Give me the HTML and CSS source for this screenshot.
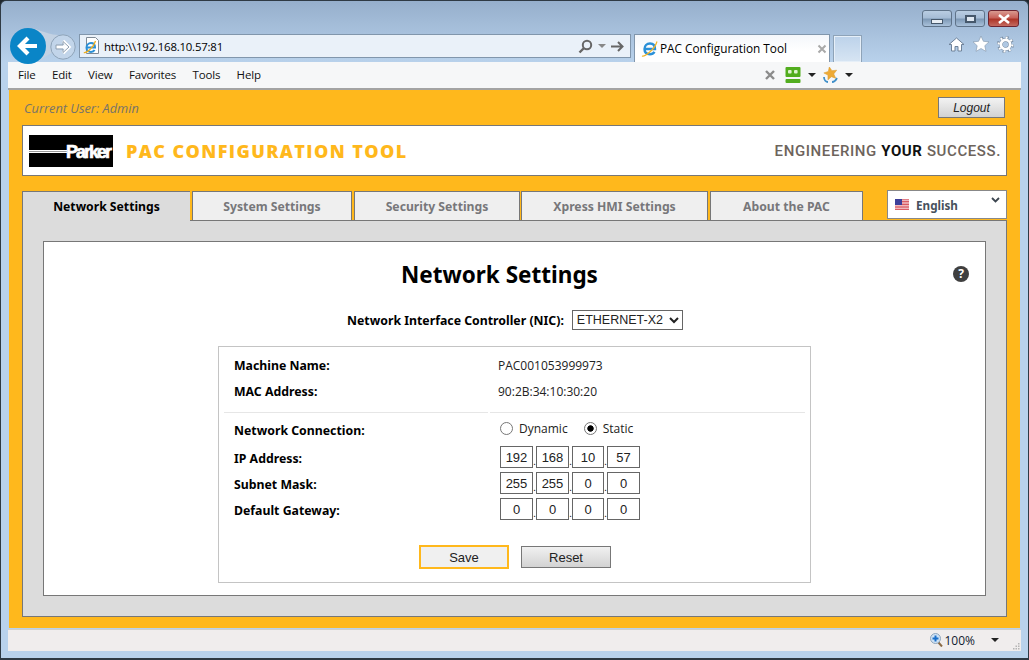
FILE: index.html
```html
<!DOCTYPE html>
<html lang="en">
<head>
    <meta charset="UTF-8">
    <title>PAC Configuration Tool</title>
    <link rel="stylesheet" href="styles.css">
</head>
<body>
    <div class="window">
        <div class="caption">
            <div class="win-btn"><span class="glyph-min"></span></div>
            <div class="win-btn"><span class="glyph-max"></span></div>
            <div class="win-btn win-close">
                <svg width="14" height="10" viewBox="0 0 14 10"><path d="M2 1l10 8M12 1L2 9" stroke="#fff" stroke-width="2.6"/></svg>
            </div>
        </div>

        <div class="nav">
            <div class="back">
                <svg class="back-icon" width="36" height="36" viewBox="0 0 36 36"><path d="M18 0c10 0 16 6 30 7v14L30 32z" fill="#c3d2e3"/><circle cx="18" cy="18" r="18" fill="#0a85c7"/><path d="M27 18H11M18 10l-8 8 8 8" fill="none" stroke="#fff" stroke-width="4.2"/></svg>
            </div>
            <div class="forward">
                <svg width="26" height="26" viewBox="0 0 26 26"><circle cx="13" cy="13" r="12.2" fill="#c2d5ea" stroke="#8ea3b8"/><path d="M6 13h12M13 7l6 6-6 6" fill="none" stroke="#fff" stroke-width="3.4"/><path d="M6 11h7V7.5l6 5.5-6 5.500V15H6z" fill="none" stroke="#8f9fb0"/></svg>
            </div>
            <div class="address">
                <svg class="page-icon" width="17" height="18" viewBox="0 0 17 18"><path d="M3.500.5h9l3 3v13h-12z" fill="#fff" stroke="#7f8a96"/><path d="M3.500 10.500h8.500c0-3-1.800-4.500-4-4.500-2.500 0-4.500 2-4.500 4.700 0 2.600 2 4.300 4.500 4.300 1.600 0 2.900-.7 3.600-1.900" fill="none" stroke="#2a8fd6" stroke-width="2"/><path d="M.8 15.500c2.500 1 10-5 11.700-11.500" fill="none" stroke="#f0b020" stroke-width="1.300"/></svg>
                <span class="url">http:\\192.168.10.57:81</span>
                <div class="addr-tools">
                    <svg width="15" height="15" viewBox="0 0 15 15"><circle cx="9" cy="6" r="4.200" fill="none" stroke="#666" stroke-width="2"/><path d="M6 9l-4.500 4.500" stroke="#666" stroke-width="2.400"/></svg>
                    <span class="caret caret-grey"></span>
                    <svg width="13" height="11" viewBox="0 0 13 11"><path d="M0 5.500h11M7 1l4.500 4.500L7 10" fill="none" stroke="#666" stroke-width="2"/></svg>
                </div>
            </div>
            <div class="tab-browser">
                <svg width="17" height="17" viewBox="0 0 17 17"><path d="M3.500 9h10.500c0-3.500-2-5.500-5-5.500-3.200 0-5.500 2.300-5.500 5.500 0 3.300 2.300 5.200 5.500 5.200 2 0 3.600-.9 4.500-2.400" fill="none" stroke="#2a90d8" stroke-width="2.400"/><path d="M1 16c2.500 1 12.500-6 15-14.500" fill="none" stroke="#f2b428" stroke-width="1.200"/></svg>
                <span class="tab-title">PAC Configuration Tool</span>
                <svg class="tab-x" width="10" height="10" viewBox="0 0 10 10"><path d="M1.500 1.500l7 7M8.500 1.500l-7 7" stroke="#a9a9a9" stroke-width="2"/></svg>
            </div>
            <div class="tab-new"></div>
            <div class="chrome-tools">
                <svg width="17" height="17" viewBox="0 0 17 17"><path d="M8.500 2L1 8.500h2.500V15h3.500v-4.500h3V15h3.500V8.500H16z" fill="#fff" stroke="#6f8299"/></svg>
                <svg width="18" height="18" viewBox="0 0 18 18"><path d="M9 1l2.400 5.300 5.600.6-4.200 3.800 1.200 5.700L9 13.500l-5 2.900 1.200-5.700L1 6.900l5.600-.6z" fill="#fff" stroke="#7f93aa" stroke-width=".6"/></svg>
                <svg width="17" height="17" viewBox="0 0 17 17" fill="none"><circle cx="8.500" cy="8.500" r="6.900" stroke="#71859c" stroke-width="3.200" stroke-dasharray="2.700 2.720"/><circle cx="8.500" cy="8.500" r="4.600" stroke="#71859c" stroke-width="3.800"/><circle cx="8.500" cy="8.500" r="6.900" stroke="#fff" stroke-width="2.200" stroke-dasharray="1.900 3.520"/><circle cx="8.500" cy="8.500" r="4.600" stroke="#fff" stroke-width="2.800"/></svg>
            </div>
        </div>

        <div class="menubar">
            <span class="menu-item">File</span>
            <span class="menu-item">Edit</span>
            <span class="menu-item">View</span>
            <span class="menu-item">Favorites</span>
            <span class="menu-item">Tools</span>
            <span class="menu-item">Help</span>
            <div class="menu-addons">
                <svg width="10" height="10" viewBox="0 0 10 10"><path d="M1 1l8 8M9 1L1 9" stroke="#8b8b8b" stroke-width="2.400"/></svg>
                <svg class="addon-robo" width="16" height="16" viewBox="0 0 16 16"><rect x="0.500" y="0" width="15" height="10" rx="1" fill="#52ad1e"/><rect x="3" y="3" width="3.600" height="3.600" rx="1" fill="#dff3cf"/><rect x="9" y="3" width="3.600" height="3.600" rx="1" fill="#dff3cf"/><rect x="0.500" y="12" width="15" height="4" rx="1" fill="#52ad1e"/></svg>
                <span class="caret"></span>
                <svg class="addon-fav" width="16" height="16" viewBox="0 0 16 16"><path d="M2 10c0 3 2 5 4 5M15 11c-1 2-2 4-5 4" fill="none" stroke="#3f8fc9" stroke-width="1.800"/><path d="M9 0l1.800 4.200 4.700.5-3.600 3 1 4.600L9 10l-4 2.300 1-4.600-3.600-3 4.700-.5z" fill="#eeaa35" stroke="#d99a2c" stroke-width=".5" transform="rotate(-12 8 8)"/></svg>
                <span class="caret"></span>
            </div>
        </div>

        <div class="page">
            <div class="user-bar">
                <span class="current-user">Current User: Admin</span>
                <button class="btn-logout">Logout</button>
            </div>

            <div class="banner">
                <div class="logo"><span class="logo-line"></span><span class="logo-text">Parker</span></div>
                <span class="app-name">PAC CONFIGURATION TOOL</span>
                <span class="tagline">ENGINEERING <b>YOUR</b> SUCCESS.</span>
            </div>

            <div class="tabs">
                <div class="tab active tab-network">Network Settings</div>
                <div class="tab tab-system">System Settings</div>
                <div class="tab tab-security">Security Settings</div>
                <div class="tab tab-xpress">Xpress HMI Settings</div>
                <div class="tab tab-about">About the PAC</div>
                <div class="lang">
                    <svg width="14" height="11" viewBox="0 0 14 11"><rect width="14" height="11" fill="#fff"/><path d="M0 .8h14M0 2.400h14M0 4h14M0 5.600h14M0 7.200h14M0 8.800h14M0 10.400h14" stroke="#d0343f" stroke-width=".9"/><rect width="7" height="6" fill="#3c3f9a"/></svg>
                    <span class="lang-name">English</span>
                    <svg class="lang-arrow" width="9" height="6" viewBox="0 0 9 6"><path d="M1 1l3.500 3.500L8 1" fill="none" stroke="#3c4650" stroke-width="1.800"/></svg>
                </div>
            </div>

            <div class="panel">
                <div class="sheet">
                    <div class="sheet-head">
                        <h1 class="sheet-title">Network Settings</h1>
                        <div class="help">?</div>
                    </div>
                    <div class="nic-row">
                        <label class="field-label">Network Interface Controller (NIC):</label>
                        <select class="nic-select"><option>ETHERNET-X2</option></select>
                    </div>
                    <div class="form-box">
                        <div class="row row-info"><span class="field-label">Machine Name:</span><span class="value">PAC001053999973</span></div>
                        <div class="row row-info"><span class="field-label">MAC Address:</span><span class="value">90:2B:34:10:30:20</span></div>
                        <div class="divider"><span></span><span></span></div>
                        <div class="row row-conn">
                            <span class="field-label">Network Connection:</span>
                            <div class="radios">
                                <label class="radio"><input type="radio" name="conn">Dynamic</label>
                                <label class="radio"><input type="radio" name="conn" checked>Static</label>
                            </div>
                        </div>
                        <div class="row row-ip">
                            <span class="field-label">IP Address:</span>
                            <div class="octets"><input class="octet" value="192"><i>.</i><input class="octet" value="168"><i>.</i><input class="octet octet-s" value="10"><i>.</i><input class="octet" value="57"></div>
                        </div>
                        <div class="row row-ip">
                            <span class="field-label">Subnet Mask:</span>
                            <div class="octets"><input class="octet" value="255"><i>.</i><input class="octet" value="255"><i>.</i><input class="octet octet-s" value="0"><i>.</i><input class="octet" value="0"></div>
                        </div>
                        <div class="row row-ip">
                            <span class="field-label">Default Gateway:</span>
                            <div class="octets"><input class="octet" value="0"><i>.</i><input class="octet" value="0"><i>.</i><input class="octet octet-s" value="0"><i>.</i><input class="octet" value="0"></div>
                        </div>
                        <div class="actions">
                            <button class="btn btn-save">Save</button>
                            <button class="btn">Reset</button>
                        </div>
                    </div>
                </div>
            </div>
        </div>

        <div class="statusbar">
            <svg width="13" height="14" viewBox="0 0 13 14"><path d="M8 9l4 4.500" stroke="#8a6a45" stroke-width="2"/><circle cx="5.500" cy="5.500" r="5" fill="#cfe2f5" stroke="#8fa5bb"/><path d="M5.500 2.500v6M2.500 5.500h6" stroke="#1a6fc9" stroke-width="2"/></svg>
            <span class="zoom-value">100%</span>
            <span class="caret caret-status"></span>
            <svg class="grip" width="7" height="7" viewBox="0 0 7 7"><path d="M5 0h1.500v1.500H5zM2.500 2.500H4V4H2.500zM5 2.500h1.500V4H5zM0 5h1.500v1.500H0zM2.500 5H4v1.500H2.500zM5 5h1.500v1.500H5z" fill="#b5b5b5"/></svg>
        </div>
    </div>
</body>
</html>
```
FILE: styles.css
```css
html, body {
    margin: 0;
    height: 100%;
    overflow: hidden;
    background: #20282e;
}

body {
    font-family: 'Open Sans', 'Noto Sans', sans-serif;
    font-size: 12px;
    color: #000;
}

.window {
    box-sizing: border-box;
    width: 1029px;
    height: 660px;
    display: flex;
    flex-direction: column;
    padding: 0 7px 7px;
    border: 1px solid #2f3a44;
    border-bottom-width: 2px;
    border-radius: 6px 6px 0 0;
    background: linear-gradient(#96afcc 0, #b9d2ec 62px, #b9d2ec 100%);
}

/* title bar */
.caption {
    flex: none;
    height: 33px;
    box-sizing: border-box;
    padding: 9px 2px 0 0;
    display: flex;
    justify-content: flex-end;
    gap: 3px;
}

.win-btn {
    box-sizing: border-box;
    width: 30px;
    height: 17px;
    display: flex;
    align-items: center;
    justify-content: center;
    border: 1px solid #5f7389;
    border-radius: 3px;
    background: linear-gradient(#b9cde2 0, #a6bdd6 45%, #7e99b6 55%, #a9c1da 100%);
}

.win-close {
    width: 31px;
    border-color: #6d2430;
    background: linear-gradient(#d99a90 0, #c8625a 45%, #ad3528 55%, #c46a60 100%);
}

.glyph-min {
    width: 10px;
    height: 3px;
    margin-top: 5px;
    background: #e8eef4;
    border: 1px solid #46586b;
}

.glyph-max {
    width: 7px;
    height: 4px;
    background: #dfe8f1;
    border: 2px solid #46586b;
}

/* address row */
.nav {
    flex: none;
    height: 28px;
    display: flex;
    align-items: flex-start;
}

.back {
    position: relative;
    z-index: 2;
    width: 36px;
    height: 36px;
    margin: -6px 0 0 2px;
}

.back-icon {
    overflow: visible;
}

.forward {
    position: relative;
    z-index: 3;
    width: 26px;
    height: 26px;
    margin-left: 4px;
}

.address {
    box-sizing: border-box;
    width: 552px;
    height: 24px;
    margin-left: 3px;
    padding: 0 6px 0 3px;
    display: flex;
    align-items: center;
    border: 1px solid #8196ac;
    background: #eaf1f9;
}

.page-icon {
    flex: none;
    margin-right: 4px;
}

.url {
    font-size: 11.400px;
    letter-spacing: -0.200px;
}

.addr-tools {
    margin-left: auto;
    display: flex;
    align-items: center;
    gap: 5px;
}

.caret {
    display: inline-block;
    width: 0;
    height: 0;
    border: 4px solid transparent;
    border-top: 4px solid #222;
    border-bottom: 0;
}

.caret-grey {
    border-top-color: #888;
}

.tab-browser {
    box-sizing: border-box;
    width: 196px;
    height: 28px;
    margin-left: 3px;
    padding: 0 2px 0 6px;
    display: flex;
    align-items: center;
    gap: 2px;
    border: 1px solid #8196ac;
    border-bottom: 0;
    background: linear-gradient(#f4f7fb, #fff 60%);
}

.tab-title {
    margin-top: -2px;
    font-size: 11.800px;
}

.tab-x {
    margin-left: auto;
}

.tab-new {
    box-sizing: border-box;
    width: 29px;
    height: 27px;
    margin: 1px 0 0 3px;
    border: 1px solid #8ea3b8;
    border-bottom: 0;
    box-shadow: inset 0 0 0 1px #e6eff8;
    background: linear-gradient(#bcd2ea, #d7e5f3);
}

.chrome-tools {
    margin: 1px 7px 0 auto;
    display: flex;
    gap: 7px;
    align-items: center;
}

/* menu */
.menubar {
    position: relative;
    flex: none;
    box-sizing: border-box;
    height: 28px;
    padding-left: 10px;
    display: flex;
    align-items: center;
    gap: 16.300px;
    background: #f6f7f8;
    border-bottom: 2px solid #a3a3a3;
}

.menu-item {
    padding-bottom: 2px;
    font-size: 11.500px;
    letter-spacing: -0.150px;
    color: #111;
}

.menu-addons {
    margin-left: 488px;
    display: flex;
    align-items: center;
}

.addon-robo {
    margin-left: 10px;
}

.menubar .caret {
    margin-left: 7px;
}

.addon-fav {
    margin-left: 6px;
}

/* page */
.page {
    flex: none;
    box-sizing: border-box;
    height: 538px;
    margin: 0 1px;
    padding: 7px 13px 11px;
    display: flex;
    flex-direction: column;
    background: #ffb81c;
}

.user-bar {
    flex: none;
    height: 21px;
    padding-left: 2px;
    display: flex;
    align-items: center;
    justify-content: space-between;
}

.current-user {
    font-style: italic;
    color: #77736a;
    font-size: 12.800px;
}

.btn-logout {
    box-sizing: border-box;
    width: 67px;
    height: 21px;
    margin-right: 2px;
    padding: 0;
    border: 1px solid #777;
    font: italic 12px 'Liberation Sans', Arial, sans-serif;
    color: #222;
    background: linear-gradient(#f3f3f3, #d2d2d2);
}

.banner {
    flex: none;
    box-sizing: border-box;
    height: 51px;
    margin-top: 7px;
    padding: 0 5px 0 6px;
    display: flex;
    align-items: center;
    background: #fff;
    border: 1px solid #777;
}

.logo {
    flex: none;
    box-sizing: border-box;
    width: 84px;
    height: 32px;
    display: flex;
    align-items: center;
    background: #000;
}

.logo-line {
    width: 38px;
    height: 1px;
    margin-top: 2px;
    background: #999;
    border-top: 1px solid #fff;
    border-bottom: 1px solid #fff;
}

.logo-text {
    margin-left: -1px;
    padding-top: 3px;
    font: 700 18px 'Liberation Sans', Arial, sans-serif;
    letter-spacing: -2px;
    color: #fff;
    -webkit-text-stroke: 0.700px #fff;
}

.app-name {
    margin-left: 13px;
    font-size: 18px;
    font-weight: 800;
    letter-spacing: 1.400px;
    color: #ffb81c;
}

.tagline {
    margin-left: auto;
    font: 500 15px Roboto, sans-serif;
    letter-spacing: 0.600px;
    color: #6d645c;
}

.tagline b {
    font-weight: 700;
    color: #111;
}

.tabs {
    flex: none;
    height: 29px;
    margin-top: 15px;
    display: flex;
    align-items: flex-start;
}

.tab {
    box-sizing: border-box;
    height: 29px;
    display: flex;
    align-items: center;
    justify-content: center;
    border: 1px solid #777;
    border-bottom: 0;
    background: #efefef;
    font: 700 12.200px 'Noto Sans', sans-serif;
    color: #77777a;
}

.tab.active {
    position: relative;
    z-index: 1;
    height: 30px;
    padding-bottom: 1px;
    border-right: 0;
    background: #dcdcdc;
    color: #000;
}

.tab-network { width: 168px; margin-right: 2px; }
.tab-system { width: 160px; margin-right: 2px; }
.tab-security { width: 166px; margin-right: 1px; }
.tab-xpress { width: 187px; margin-right: 2px; }
.tab-about { width: 153px; }

.lang {
    box-sizing: border-box;
    width: 120px;
    height: 29px;
    margin: -1px 0 0 auto;
    padding: 0 6px 0 7px;
    display: flex;
    align-items: center;
    background: #fff;
    border: 1px solid #888;
}

.lang-name {
    margin-left: 7px;
    font: 700 11.700px 'Noto Sans', sans-serif;
    color: #47515c;
}

.lang-arrow {
    margin: -10px 0 0 auto;
}

.panel {
    flex: 1;
    box-sizing: border-box;
    padding: 20px;
    background: #dcdcdc;
    border: 1px solid #777;
}

.sheet {
    box-sizing: border-box;
    height: 100%;
    padding: 0 174px;
    background: #fff;
    border: 1px solid #777;
}

.sheet-head {
    height: 66px;
    margin: 0 -158px 0 -174px;
    display: flex;
    align-items: center;
    justify-content: space-between;
    padding-left: 357px;
}

.sheet-title {
    margin: -2px 0 0;
    font: 700 22.500px 'Noto Sans', sans-serif;
    line-height: 47px;
}

.help {
    width: 16px;
    height: 16px;
    margin-top: -2px;
    border-radius: 50%;
    background: #3f3f3f;
    color: #fff;
    font: 700 12px/16px 'Noto Sans', sans-serif;
    text-align: center;
}

.nic-row {
    height: 38px;
    padding-top: 2px;
    box-sizing: border-box;
    display: flex;
    align-items: flex-start;
    margin-left: 129px;
    gap: 8px;
}

.field-label {
    font: 700 12.300px/20px 'Noto Sans', sans-serif;
    white-space: nowrap;
}

.nic-row .field-label {
    margin-top: 1px;
}

.nic-select {
    width: 111px;
    height: 20px;
    padding: 0;
    border: 1px solid #666;
    border-radius: 0;
    background: #fff;
    font: 12.500px 'Liberation Sans', Arial, sans-serif;
    color: #222;
}

.form-box {
    box-sizing: border-box;
    height: 237px;
    padding: 5px;
    border: 1px solid #c4c4c4;
}

.row {
    display: grid;
    grid-template-columns: 264px 1fr;
    padding-left: 10px;
    align-items: center;
}

.row-info {
    height: 26px;
}

.row-info .field-label {
    margin-top: 2px;
}

.value {
    font-size: 12px;
    color: #222;
}

.divider {
    display: flex;
    gap: 2px;
    margin-top: 8px;
}

.divider span {
    height: 1px;
    background: #e6e6e6;
}

.divider span:first-child { width: 264px; }
.divider span:last-child { flex: 1; }

.row-conn {
    height: 30px;
    margin-top: 1px;
}

.row-conn .field-label,
.row-ip .field-label {
    margin-top: 4px;
}

.radios {
    display: flex;
    gap: 16px;
    margin: -2px 0 0 2px;
}

.radio {
    display: flex;
    align-items: center;
    gap: 6px;
    font-size: 12px;
    color: #222;
}

.radio input {
    appearance: none;
    box-sizing: border-box;
    width: 13px;
    height: 13px;
    margin: 0;
    border: 1px solid #777;
    border-radius: 50%;
    background: #fff;
}

.radio input:checked {
    background: radial-gradient(circle, #000 0, #000 2.800px, #fff 3.600px);
}

.row-ip {
    height: 26px;
}

.octets {
    display: flex;
    align-items: center;
    margin-left: 2px;
}

.octets i {
    width: 3px;
    padding-top: 8px;
    font: 11px/12px 'Liberation Sans', Arial, sans-serif;
    text-align: center;
    color: #222;
}

.octet {
    box-sizing: border-box;
    width: 33px;
    height: 22px;
    padding: 0;
    border: 1px solid #666;
    border-radius: 0;
    outline: 0;
    text-align: center;
    font: 13px 'Liberation Sans', Arial, sans-serif;
    color: #222;
}

.octet-s {
    width: 32px;
}

.actions {
    display: flex;
    justify-content: flex-start;
    gap: 12px;
    margin: 23px 0 0 195px;
}

.btn {
    box-sizing: border-box;
    width: 90px;
    height: 22px;
    margin-top: 1px;
    padding: 0;
    border: 1px solid #777;
    font: 13px 'Liberation Sans', Arial, sans-serif;
    color: #222;
    background: linear-gradient(#f1f1f1, #d3d3d3);
}

.btn-save {
    height: 24px;
    margin-top: 0;
    border: 2px solid #ffb81c;
    background: #f0f0f0;
}

/* status */
.statusbar {
    flex: none;
    box-sizing: border-box;
    height: 22px;
    margin-top: 1px;
    padding: 0 1px 1px 0;
    display: flex;
    align-items: center;
    justify-content: flex-end;
    background: #f0eded;
    border-top: 1px solid #cfcfcf;
}

.zoom-value {
    margin: 0 16px 0 1px;
    font-size: 12px;
    color: #101c30;
}

.caret-status {
    margin-right: 14px;
}

.grip {
    align-self: flex-end;
}
```
